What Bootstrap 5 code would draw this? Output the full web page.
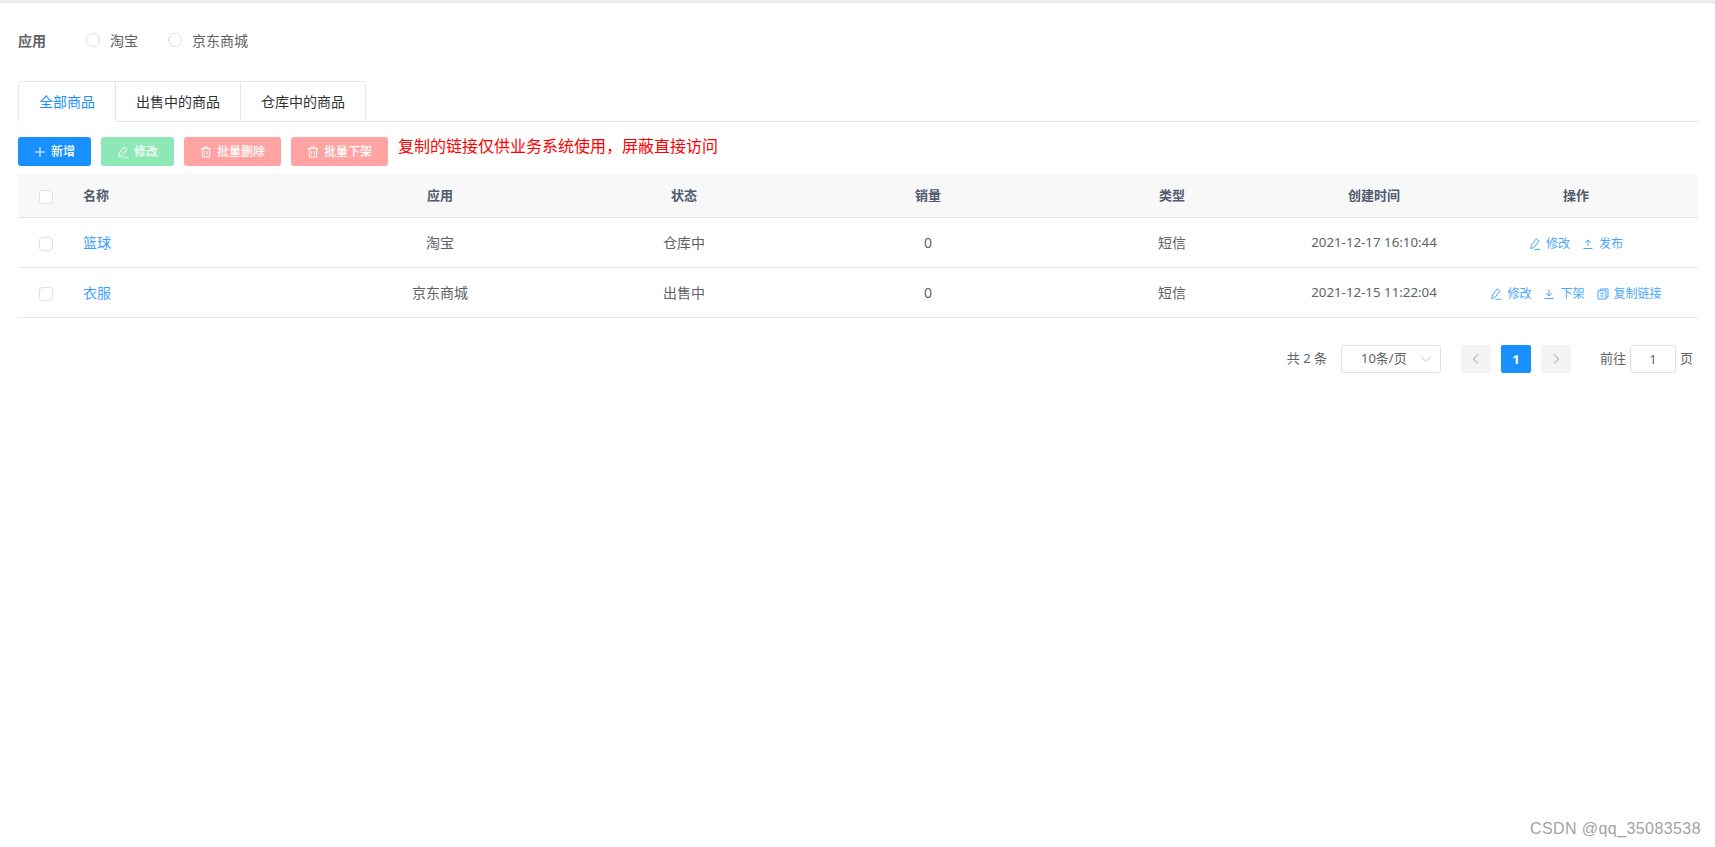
<!DOCTYPE html>
<html lang="zh-CN">
<head>
<meta charset="utf-8">
<title>商品</title>
<link href="https://cdn.jsdelivr.net/npm/bootstrap@5.3.0/dist/css/bootstrap.min.css" rel="stylesheet">
<style>
:root{--fs:"Noto Sans","Noto Sans CJK SC",sans-serif;}
html,body{height:100%;}
body{font-family:var(--fs);font-size:14px;color:#606266;background:#fff;overflow:hidden;position:relative;}
.topline{height:3px;background:linear-gradient(#f2f3f6,#dfe2ea);}
.page-wrap{padding:0 17px 0 18px;}
.filter-row{height:78px;align-items:center;padding-bottom:4px;}
.filter-label{font-weight:700;width:68px;font-size:14px;}
.radio-item{display:flex;align-items:center;margin-right:30px;}
.radio-dot{width:14px;height:14px;margin:0 10px 0 0;border:1px solid #dcdfe6;background:#fff;}
.radio-item label{color:#606266;}
.tabs-line{border-bottom:1px solid #e4e7ed;height:41px;margin-bottom:15px;}
.tabs-box{border:1px solid #e4e7ed;border-bottom:0;border-radius:4px 4px 0 0;height:40px;}
.tabs-box .nav-link{height:40px;padding:0 20px;line-height:40px;border:0;border-left:1px solid #e4e7ed;border-radius:0;margin:0;color:#303133;font-size:14px;white-space:nowrap;background:transparent;}
.tabs-box .nav-item:first-child .nav-link{border-left:0;}
.tabs-box .nav-link.active{color:#1890ff;background:#fff;height:41px;}
.toolbar{height:29px;margin-bottom:8px;}
.tool-btn{height:29px;width:73px;padding:0;font-size:12px;font-weight:500;color:#fff;border:0;border-radius:3px;display:inline-flex;align-items:center;justify-content:center;gap:5px;margin-right:10px;}
.tool-btn:disabled{opacity:1;color:#fff;}
.tool-btn svg{width:12px;height:12px;}
.wide-btn{width:97px;}
.tb-blue,.tb-blue:hover{background:#1890ff;}
.tb-green,.tb-green:disabled{background:#8ce9b5;}
.tb-red,.tb-red:disabled{background:#ffa3a3;}
.copy-note{color:#f00;font-size:16px;line-height:18px;position:relative;top:-6px;}
.goods-table{table-layout:fixed;width:1680px;margin:0;--bs-table-border-color:#e4e7ed;font-size:14px;color:#606266;}
.goods-table>thead>tr>th{height:43px;background:#f8f8f9;font-size:13px;font-weight:700;color:#515a6e;padding:0 10px;border-bottom:1px solid #e4e7ed;vertical-align:middle;text-align:center;box-shadow:none;}
.goods-table>tbody>tr>td{height:50px;padding:0 10px;vertical-align:middle;text-align:center;color:#606266;border-bottom:1px solid #e4e7ed;box-shadow:none;}
.goods-table .cell-name{text-align:left;}
.goods-table .cell-check{padding:0;}
.goods-table>tbody>tr>td.cell-date{font-size:13.3px;padding-top:2px;}
.table-check{width:14px;height:14px;margin:4px 0 0;border:1px solid #dcdfe6;border-radius:2px;display:block;margin-left:21px;}
.name-link{color:#1890ff;text-decoration:none;opacity:.85;}
.op-link{color:#1890ff;opacity:.8;font-size:12px;text-decoration:none;display:inline-flex;align-items:center;gap:5px;margin:0 0 0 12px;white-space:nowrap;vertical-align:-2px;}
.op-link:first-child{margin-left:0;}
.op-link svg{width:12px;height:12px;}
.pager{height:28px;margin-top:27px;font-size:13px;padding-right:5px;}
.pager-total{margin-right:14px;}
.pager-select{width:100px;height:28px;padding:0 0 0 19px;border:1px solid #dcdfe6;border-radius:3px;font-size:13px;color:#606266;background-image:url("data:image/svg+xml,%3csvg xmlns='http://www.w3.org/2000/svg' viewBox='0 0 12 12'%3e%3cpath d='M1 3.5 6 8.5 11 3.5' fill='none' stroke='%23c0c4cc' stroke-width='1'/%3e%3c/svg%3e");background-size:12px 12px;background-position:right 8px center;margin-right:20px;}
.pager-list{margin:0 29px 0 0;--bs-pagination-border-width:0;gap:10px;}
.pager-list .page-item .page-link,.pager-list .page-item:not(:first-child) .page-link{width:30px;height:28px;padding:0;line-height:28px;text-align:center;background:#f4f4f5;color:#c0c4cc;font-size:13px;border-radius:2px!important;display:flex;align-items:center;justify-content:center;margin:0;}
.pager-list .page-item.active .page-link{background:#1890ff;color:#fff;font-weight:700;}
.pager-input{width:46px;height:28px;padding:0;border:1px solid #dcdfe6;border-radius:3px;text-align:center;font-size:13px;color:#606266;margin:0 4px 0 4px;}
.watermark{position:absolute;right:14px;bottom:6px;font-family:"Liberation Sans",sans-serif;font-size:16px;color:#a3a3a3;letter-spacing:.42px;}
</style>
</head>
<body>
<svg width="0" height="0" class="position-absolute">
<defs>
<symbol id="i-edit" viewBox="0 0 12 12"><path d="M1.8 10.6 2.4 7 7.2 .9 10 3.2 5 9.4 1.8 10.6ZM5.4 11.4H11.4" fill="none" stroke="currentColor" stroke-width="1"/></symbol>
<symbol id="i-trash" viewBox="0 0 12 12"><path d="M1 2.6H11M4.2 2.6V1H7.8V2.6M2.4 2.6V11H9.6V2.6M4.7 5V8.5M7.3 5V8.5" fill="none" stroke="currentColor" stroke-width="1"/></symbol>
<symbol id="i-plus" viewBox="0 0 12 12"><path d="M6 1V11M1 6H11" fill="none" stroke="currentColor" stroke-width="1"/></symbol>
<symbol id="i-up" viewBox="0 0 12 12"><path d="M1.5 10.5H10.5M6 8V2M3.2 4.6 6 1.9 8.8 4.6" fill="none" stroke="currentColor" stroke-width="1"/></symbol>
<symbol id="i-down" viewBox="0 0 12 12"><path d="M1.5 10.5H10.5M6 1.5V7.8M3.2 5.2 6 8 8.8 5.2" fill="none" stroke="currentColor" stroke-width="1"/></symbol>
<symbol id="i-copy" viewBox="0 0 12 12"><path d="M3.4 2.4V1H11V9.4H9.2M1 2.8H9V11H1ZM3.2 5.6H6.8M3.2 8H6.8" fill="none" stroke="currentColor" stroke-width="1"/></symbol>
</defs>
</svg>
<div class="topline"></div>
<div class="page-wrap">
  <form class="d-flex filter-row">
    <span class="filter-label">应用</span>
    <div class="radio-item"><input class="form-check-input radio-dot" type="radio" name="app" id="r1"><label for="r1">淘宝</label></div>
    <div class="radio-item"><input class="form-check-input radio-dot" type="radio" name="app" id="r2"><label for="r2">京东商城</label></div>
  </form>
  <div class="tabs-line d-flex">
    <ul class="nav tabs-box">
      <li class="nav-item"><a class="nav-link active" href="#">全部商品</a></li>
      <li class="nav-item"><a class="nav-link" href="#">出售中的商品</a></li>
      <li class="nav-item"><a class="nav-link" href="#">仓库中的商品</a></li>
    </ul>
  </div>
  <div class="toolbar d-flex align-items-center">
    <button class="btn tool-btn tb-blue" type="button"><svg><use href="#i-plus"/></svg>新增</button>
    <button class="btn tool-btn tb-green" type="button" disabled><svg><use href="#i-edit"/></svg>修改</button>
    <button class="btn tool-btn wide-btn tb-red" type="button" disabled><svg><use href="#i-trash"/></svg>批量删除</button>
    <button class="btn tool-btn wide-btn tb-red" type="button" disabled><svg><use href="#i-trash"/></svg>批量下架</button>
    <span class="copy-note">复制的链接仅供业务系统使用，屏蔽直接访问</span>
  </div>
  <table class="table goods-table">
    <colgroup><col style="width:55px"><col style="width:245px"><col style="width:244px"><col style="width:244px"><col style="width:244px"><col style="width:244px"><col style="width:160px"><col style="width:244px"></colgroup>
    <thead>
      <tr>
        <th class="cell-check"><input class="form-check-input table-check" type="checkbox"></th>
        <th class="cell-name">名称</th><th>应用</th><th>状态</th><th>销量</th><th>类型</th><th>创建时间</th><th>操作</th>
      </tr>
    </thead>
    <tbody>
      <tr>
        <td class="cell-check"><input class="form-check-input table-check" type="checkbox"></td>
        <td class="cell-name"><a class="name-link" href="#">篮球</a></td><td>淘宝</td><td>仓库中</td><td>0</td><td>短信</td><td class="cell-date">2021-12-17 16:10:44</td>
        <td><a class="op-link" href="#"><svg><use href="#i-edit"/></svg>修改</a><a class="op-link" href="#"><svg><use href="#i-up"/></svg>发布</a></td>
      </tr>
      <tr>
        <td class="cell-check"><input class="form-check-input table-check" type="checkbox"></td>
        <td class="cell-name"><a class="name-link" href="#">衣服</a></td><td>京东商城</td><td>出售中</td><td>0</td><td>短信</td><td class="cell-date">2021-12-15 11:22:04</td>
        <td><a class="op-link" href="#"><svg><use href="#i-edit"/></svg>修改</a><a class="op-link" href="#"><svg><use href="#i-down"/></svg>下架</a><a class="op-link" href="#"><svg><use href="#i-copy"/></svg>复制链接</a></td>
      </tr>
    </tbody>
  </table>
  <div class="pager d-flex justify-content-end align-items-center">
    <span class="pager-total">共 2 条</span>
    <select class="form-select pager-select"><option>10条/页</option></select>
    <ul class="pagination pager-list">
      <li class="page-item disabled"><a class="page-link" href="#"><svg width="10" height="12" viewBox="0 0 10 12"><path d="M7 1.5 2.5 6 7 10.5" fill="none" stroke="currentColor" stroke-width="1.4"/></svg></a></li>
      <li class="page-item active"><a class="page-link" href="#">1</a></li>
      <li class="page-item"><a class="page-link" href="#"><svg width="10" height="12" viewBox="0 0 10 12"><path d="M3 1.5 7.5 6 3 10.5" fill="none" stroke="currentColor" stroke-width="1.4"/></svg></a></li>
    </ul>
    <span>前往</span><input class="form-control pager-input" value="1"><span>页</span>
  </div>
</div>
<div class="watermark">CSDN @qq_35083538</div>
</body>
</html>
